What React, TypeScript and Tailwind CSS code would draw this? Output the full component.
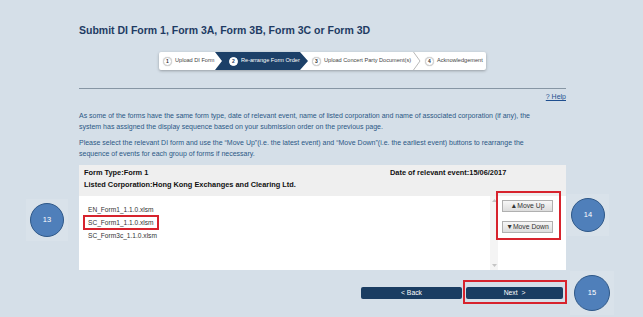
import React from 'react';

function StepNum({ n, active }: { n: number; active?: boolean }) {
  return (
    <span
      className={
        'flex h-[9px] w-[9px] shrink-0 items-center justify-center rounded-full border text-[5px] font-bold leading-none ' +
        (active ? 'border-white bg-white text-[#1c4068]' : 'border-[#d0d0d0] bg-white text-[#333] shadow-[0_0_1px_rgba(0,0,0,0.3)]')
      }
    >
      {n}
    </span>
  );
}

function Stepper() {
  return (
    <div className="flex h-[18px] w-[327px] items-center rounded-[2px] bg-white text-[5.6px] leading-none text-[#444] shadow-[0_1px_3px_rgba(0,0,0,0.3)]">
      <div className="flex w-[56px] items-center gap-[3px] pl-[4px]">
        <StepNum n={1} />
        <span className="whitespace-nowrap">Upload DI Form</span>
      </div>
      <div className="flex h-full w-[93px] items-center gap-[3px] bg-[#1c4068] pl-[14px] text-white [clip-path:polygon(0_0,calc(100%_-_8px)_0,100%_50%,calc(100%_-_8px)_100%,0_100%,7px_50%)]">
        <StepNum n={2} active />
        <span className="whitespace-nowrap">Re-arrange Form Order</span>
      </div>
      <div className="flex w-[105px] items-center gap-[3px] pl-[4px]">
        <StepNum n={3} />
        <span className="whitespace-nowrap">Upload Concert Party Document(s)</span>
      </div>
      <svg width="8" height="18" viewBox="0 0 8 18" className="shrink-0">
        <polyline points="0.5,0 7,9 0.5,18" fill="none" stroke="#b9b9b9" strokeWidth="1" />
      </svg>
      <div className="flex items-center gap-[3px] pl-[4px]">
        <StepNum n={4} />
        <span className="whitespace-nowrap">Acknowledgement</span>
      </div>
    </div>
  );
}

function Callout({ n, x, y, size }: { n: number; x: number; y: number; size: number }) {
  return (
    <>
      <div
        className="absolute bg-[#d9e2ea]"
        style={{ left: x - 4, top: y - 4, width: size + 8, height: size + 8 }}
      />
      <div
        className="absolute flex items-center justify-center rounded-full border border-[#2f5888] bg-[#4f7fba] text-[7.5px] text-white"
        style={{ left: x, top: y, width: size, height: size }}
      >
        {n}
      </div>
    </>
  );
}

const files = ['EN_Form1_1.1.0.xlsm', 'SC_Form1_1.1.0.xlsm', 'SC_Form3c_1.1.0.xlsm'];

export default function App() {
  return (
    <div className="relative h-[317px] w-[643px] overflow-hidden bg-[#d5dfe8] font-['Liberation_Sans',Arial,sans-serif]">
      <div className="ml-[79px] w-[487px] pt-[24px]">
        <h1 className="text-[10.5px] font-bold leading-[12px] text-[#1e3b63]">
          Submit DI Form 1, Form 3A, Form 3B, Form 3C or Form 3D
        </h1>

        <div className="mt-[16px] flex justify-center">
          <Stepper />
        </div>

        <div className="mt-[18px] border-t border-[#8796a4]" />

        <div className="mt-[3px] text-right text-[7px] leading-[9px]">
          <span className="text-[#1f4f8f] underline">? Help</span>
        </div>

        <div className="mt-[10px] w-[470px] text-[7px] leading-[10.5px] text-[#2b5886]">
          <p>
            As some of the forms have the same form type, date of relevant event, name of listed corporation and name of
            associated corporation (if any), the system has assigned the display sequence based on your submission order on
            the previous page.
          </p>
          <p className="mt-[6px]">
            Please select the relevant DI form and use the “Move Up”(i.e. the latest event) and “Move Down”(i.e. the earliest
            event) buttons to rearrange the sequence of events for each group of forms if necessary.
          </p>
        </div>

        <div className="mt-[6px] bg-white">
          <div className="bg-[#efefef] px-[5px] pb-[5px] pt-[2px] text-[7.4px] font-bold leading-[12px] text-[#111]">
            <div className="grid grid-cols-[306px_1fr]">
              <span>Form Type:Form 1</span>
              <span>Date of relevant event:15/06/2017</span>
            </div>
            <div>Listed Corporation:Hong Kong Exchanges and Clearing Ltd.</div>
          </div>
          <div className="flex h-[74px]">
            <div className="flex flex-1 flex-col items-start pl-[5px] pt-[6.5px] text-[6.6px] leading-[13px] text-[#333]">
              {files.map((f, i) => (
                <span
                  key={f}
                  className={'px-[4px] ' + (i === 1 ? 'outline-2 -outline-offset-1 outline-[#d7232d]' : '')}
                >
                  {f}
                </span>
              ))}
            </div>
            <div className="flex w-[8px] flex-col items-center justify-between bg-[#f4f4f4] py-[3px]">
              <svg width="5" height="3" viewBox="0 0 5 3">
                <polygon points="2.5,0 5,3 0,3" fill="#c4c4c4" />
              </svg>
              <svg width="5" height="3" viewBox="0 0 5 3">
                <polygon points="0,0 5,0 2.5,3" fill="#c4c4c4" />
              </svg>
            </div>
            <div className="flex w-[68px] flex-col gap-[9px] pl-[4px] pt-[4px]">
              <button className="h-[12px] w-[51px] border border-[#b0b0b0] bg-gradient-to-b from-[#f7f7f7] to-[#dddddd] text-[6.8px] leading-none text-[#333]">
                ▲Move Up
              </button>
              <button className="h-[12px] w-[51px] border border-[#b0b0b0] bg-gradient-to-b from-[#f7f7f7] to-[#dddddd] text-[6.8px] leading-none text-[#333]">
                ▼Move Down
              </button>
            </div>
          </div>
        </div>

        <div className="mt-[17px] flex justify-end gap-[4px] pr-[3px]">
          <button className="h-[12px] w-[101px] rounded-[2px] bg-[#1a3d62] text-[6.8px] leading-none text-white">
            &lt; Back
          </button>
          <button className="h-[12px] w-[97px] rounded-[2px] bg-[#1a3d62] text-[6.8px] leading-none text-white">
            Next&nbsp;&nbsp;&gt;
          </button>
        </div>
      </div>

      {/* annotation highlights */}
      <div className="absolute left-[496px] top-[191px] h-[49px] w-[65px] border-2 border-[#d7232d]" />
      <div className="absolute left-[463px] top-[280px] h-[24px] w-[104px] border-2 border-[#d7232d]" />

      <Callout n={13} x={30} y={203} size={34} />
      <Callout n={14} x={571} y={198} size={34} />
      <Callout n={15} x={574} y={275} size={36} />
    </div>
  );
}
